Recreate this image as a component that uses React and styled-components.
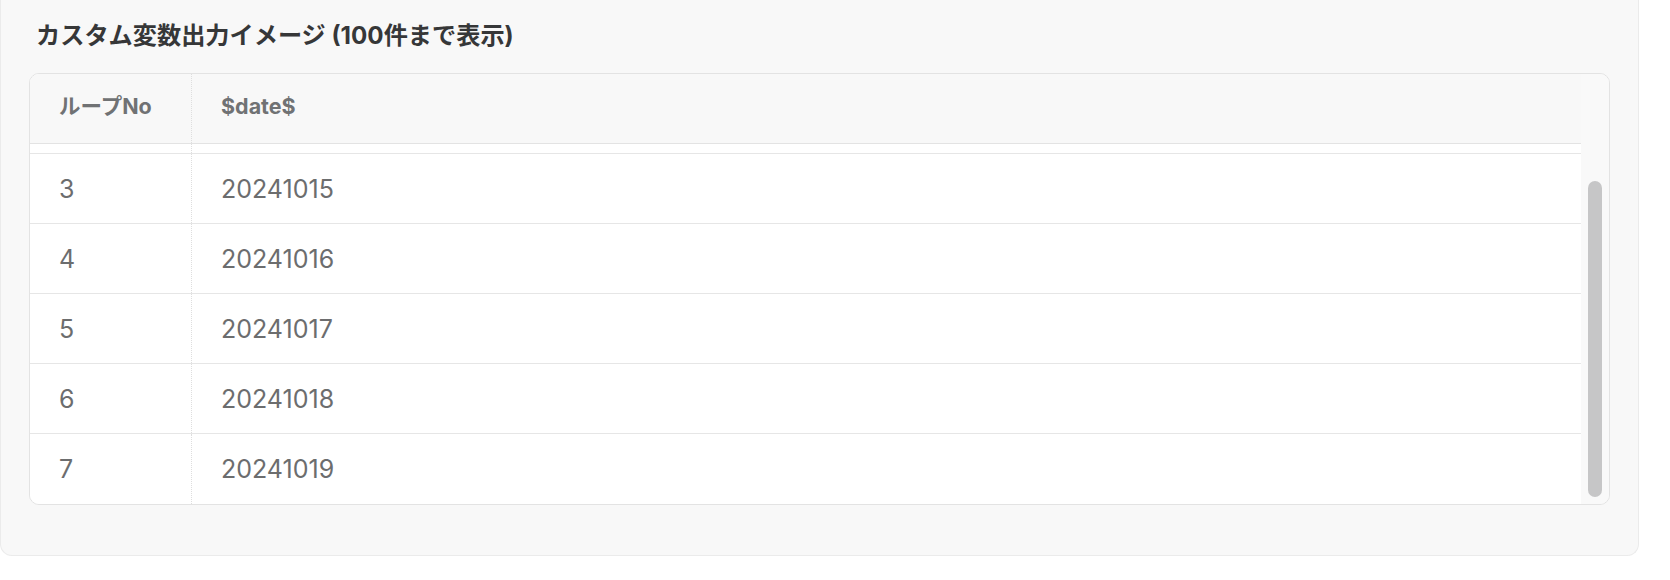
import React, {useLayoutEffect, useRef} from 'react';
import styled, {createGlobalStyle} from 'styled-components';

const GlobalStyle = createGlobalStyle`
body {
  margin: 0;
  background: #ffffff;
  font-family: "Inter", "Noto Sans CJK JP", sans-serif;
}
`;

const ROW_H = 70;
const VIEW_H = 430;
const TRACK_W = 28;
const THUMB_GAP = 7;

const Panel = styled.section`
width: 1639px;
box-sizing: border-box;
padding: 18px 28px 50px 28px;
background: #f8f8f8;
border: 1px solid #ebebeb;
border-top: none;
border-radius: 0 0 12px 12px;
`;

const Title = styled.h2`
margin: 0 0 19px 0;
padding-left: 7px;
font-size: 24.2px;
line-height: 36px;
font-weight: 700;
color: #363738;
`;

const TableCard = styled.div`
display: flex;
border: 1px solid #e3e3e3;
border-radius: 10px;
overflow: hidden;
background: #f9f9f9;
`;

const ScrollArea = styled.div`
flex: 1;
height: ${VIEW_H}px;
overflow: hidden;
`;

const Track = styled.div`
width: ${TRACK_W}px;
flex: none;
position: relative;
background: #f9f9f9;
`;

const Thumb = styled.div`
position: absolute;
left: ${THUMB_GAP}px;
right: ${THUMB_GAP}px;
background: #c6c6c7;
border-radius: 7px;
`;

const Row = styled.div`
display: grid;
grid-template-columns: 162px 1fr;
height: ${ROW_H}px;
box-sizing: border-box;
border-bottom: 1px solid #e6e6e6;
background: #ffffff;

&:last-child {
  border-bottom: none;
}
`;

const HeaderRow = styled(Row)`
position: sticky;
top: 0;
z-index: 1;
background: #f8f8f8;
border-bottom: 1px solid #e3e3e3;
`;

const Cell = styled.div`
display: flex;
align-items: center;
padding-left: 29px;
border-right: ${props => (props.first ? '1px dotted #dedede' : 'none')};
font-size: 25px;
line-height: 32px;
color: #6c6d6e;
`;

const HeadCell = styled(Cell)`
padding-bottom: 5px;
font-size: 21.5px;
font-weight: 700;
color: #707274;
`;

const dates = ['20241013', '20241014', '20241015', '20241016', '20241017', '20241018', '20241019'];

const App = () => {
    const scrollRef = useRef(null);
    useLayoutEffect(() => {
        if (scrollRef.current) scrollRef.current.scrollTop = 10000;
    }, []);

    const contentH = ROW_H * (dates.length + 1);
    const thumbLen = VIEW_H * VIEW_H / contentH;
    const thumbTop = VIEW_H - thumbLen + THUMB_GAP;

    return (
        <>
            <GlobalStyle/>
            <Panel>
                <Title>カスタム変数出力イメージ (100件まで表示)</Title>
                <TableCard>
                    <ScrollArea ref={scrollRef}>
                        <HeaderRow>
                            <HeadCell first>ループNo</HeadCell>
                            <HeadCell>$date$</HeadCell>
                        </HeaderRow>
                        {dates.map((d, i) => (
                            <Row key={d}>
                                <Cell first>{i + 1}</Cell>
                                <Cell>{d}</Cell>
                            </Row>
                        ))}
                    </ScrollArea>
                    <Track>
                        <Thumb style={{top: thumbTop, height: thumbLen - THUMB_GAP * 2}}/>
                    </Track>
                </TableCard>
            </Panel>
        </>
    );
};

export default App;
